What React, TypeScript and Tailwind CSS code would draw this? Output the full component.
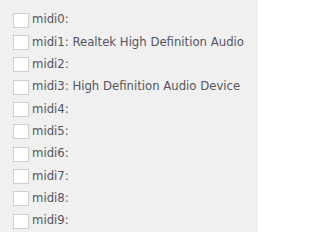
const devices = [
  "midi0:",
  "midi1: Realtek High Definition Audio",
  "midi2:",
  "midi3: High Definition Audio Device",
  "midi4:",
  "midi5:",
  "midi6:",
  "midi7:",
  "midi8:",
  "midi9:",
];

export default function App() {
  return (
    <div className="h-[232px] w-[258px] overflow-hidden bg-[#f0f0f0] pl-[13px] pt-[9px] font-['DejaVu_Sans',sans-serif]">
      {devices.map((name) => (
        <label key={name} className="flex h-[22.33px] items-center gap-[3px]">
          <span className="h-[15px] w-[16px] shrink-0 border border-[#cfcfcf] bg-white" />
          <span className="whitespace-nowrap text-[11.7px] text-[#555560]">{name}</span>
        </label>
      ))}
    </div>
  );
}
